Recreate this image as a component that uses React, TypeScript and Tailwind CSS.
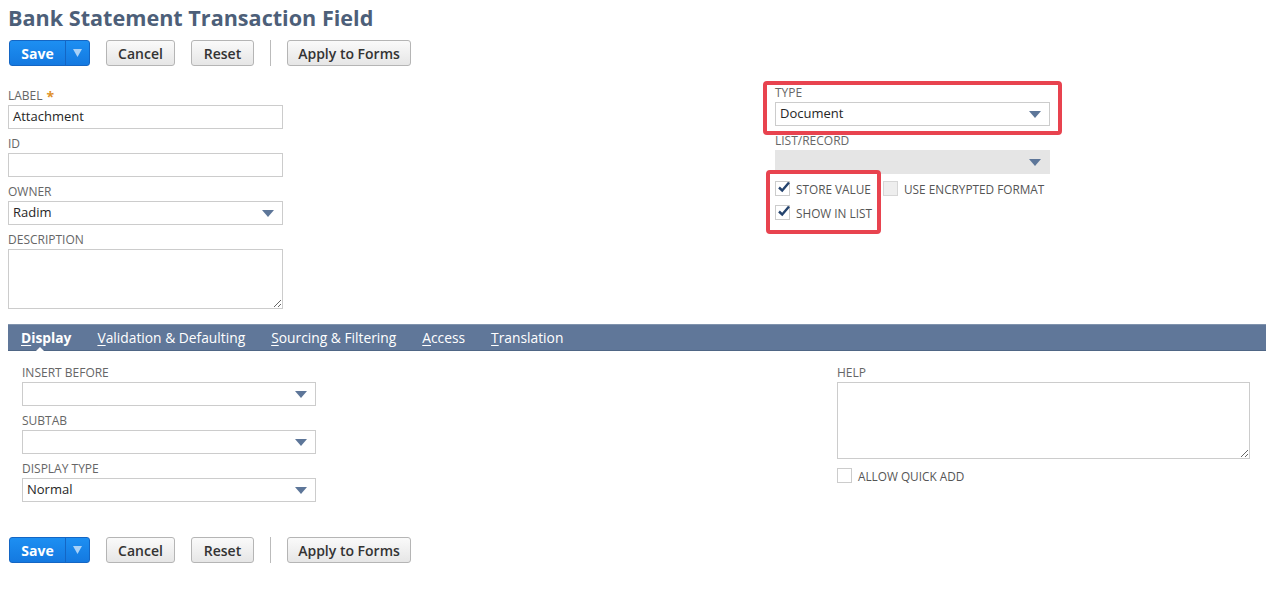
import type { ReactNode } from 'react'

const font = { fontFamily: '"Open Sans", "Liberation Sans", sans-serif' }

function Caret() {
  return (
    <svg width="12" height="7" viewBox="0 0 12 7" className="shrink-0">
      <path d="M0 0 L12 0 L6 7 Z" fill="#5d7699" />
    </svg>
  )
}

function FieldLabel({ children }: { children: ReactNode }) {
  return (
    <div className="h-[20px] flex items-end pb-[1px] text-[12px] leading-[16px] uppercase text-[#666]">
      {children}
    </div>
  )
}

function TextInput({ value, width }: { value?: string; width: string }) {
  return (
    <div className={`${width} h-[24px] border border-[#ccc] bg-white px-[4px] flex items-center text-[13px] text-[#262626]`}>
      {value}
    </div>
  )
}

function Select({ value, width, disabled }: { value?: string; width: string; disabled?: boolean }) {
  return (
    <div
      className={`${width} h-[24px] border flex items-center justify-between pl-[4px] pr-[8px] text-[13px] text-[#262626] ${
        disabled ? 'bg-[#e5e5e5] border-[#e5e5e5]' : 'bg-white border-[#ccc]'
      }`}
    >
      <span>{value}</span>
      <Caret />
    </div>
  )
}

function Checkbox({ checked, disabled }: { checked?: boolean; disabled?: boolean }) {
  return (
    <div
      className={`w-[15px] h-[15px] border relative shrink-0 ${
        disabled ? 'bg-[#eee] border-[#d6d6d6]' : 'bg-white border-[#ccc]'
      }`}
    >
      {checked && (
        <svg width="14" height="12" viewBox="0 0 14 12" className="absolute left-[1px] top-[-1px]">
          <path d="M2 6.5 L5.2 9.5 L12 1.5" fill="none" stroke="#24436e" strokeWidth="2.4" />
        </svg>
      )}
    </div>
  )
}

function CheckRow({ label, checked, disabled }: { label: string; checked?: boolean; disabled?: boolean }) {
  return (
    <div className="flex items-center gap-[6px] h-[24px]">
      <Checkbox checked={checked} disabled={disabled} />
      <span className="text-[11.8px] uppercase text-[#555] pt-[3px]">{label}</span>
    </div>
  )
}

function GrayButton({ children, w }: { children: ReactNode; w: string }) {
  return (
    <button className={`${w} h-[26px] rounded-[3px] border border-[#b5b5b5] bg-gradient-to-b from-[#fafafa] to-[#e6e6e6] text-[14px] font-semibold text-[#333]`}>
      {children}
    </button>
  )
}

function ButtonBar() {
  return (
    <div className="flex items-center gap-4 pl-[9px]">
      <div className="flex h-[26px] w-[81px] rounded-[3px] border border-[#1466c4] bg-gradient-to-b from-[#1d8ff2] to-[#1479e0] overflow-hidden">
        <button className="w-[55px] text-[14px] font-bold text-white">Save</button>
        <div className="flex-1 border-l border-[#1466c4] flex items-center justify-center">
          <svg width="9" height="8" viewBox="0 0 9 8">
            <path d="M0 0 L9 0 L4.5 8 Z" fill="#a9d1f7" />
          </svg>
        </div>
      </div>
      <GrayButton w="w-[69px]">Cancel</GrayButton>
      <GrayButton w="w-[63px]">Reset</GrayButton>
      <div className="w-px h-[26px] bg-[#bbb]" />
      <GrayButton w="w-[124px]">Apply to Forms</GrayButton>
    </div>
  )
}

const tabs = [
  { key: 'D', rest: 'isplay', active: true },
  { key: 'V', rest: 'alidation & Defaulting' },
  { key: 'S', rest: 'ourcing & Filtering' },
  { key: 'A', rest: 'ccess' },
  { key: 'T', rest: 'ranslation' },
]

export default function App() {
  return (
    <div className="min-h-screen bg-white" style={font}>
      <h1 className="pl-[8px] pt-[3px] text-[21.6px] leading-[30px] font-bold text-[#4d5f79]">
        Bank Statement Transaction Field
      </h1>

      <div className="mt-[7px]">
        <ButtonBar />
      </div>

      {/* main fields */}
      <div className="flex pl-[8px] mt-[18px]">
        <div className="w-[767px] pt-[1px]">
          <FieldLabel>
            Label <span className="ml-[4px] text-[#e0912a] text-[14px] font-bold leading-[14px]">*</span>
          </FieldLabel>
          <TextInput value="Attachment" width="w-[275px]" />
          <div className="h-[4px]" />
          <FieldLabel>ID</FieldLabel>
          <TextInput width="w-[275px]" />
          <div className="h-[4px]" />
          <FieldLabel>Owner</FieldLabel>
          <Select value="Radim" width="w-[275px]" />
          <div className="h-[4px]" />
          <FieldLabel>Description</FieldLabel>
          <textarea className="block w-[275px] h-[60px] border border-[#ccc] bg-white" />
        </div>

        <div className="relative -mt-[2px]">
          <FieldLabel>Type</FieldLabel>
          <Select value="Document" width="w-[275px]" />
          <div className="h-[4px]" />
          <FieldLabel>List/Record</FieldLabel>
          <Select width="w-[275px]" disabled />
          <div className="h-[2px]" />
          <div className="flex items-center">
            <div className="w-[108px]">
              <CheckRow label="Store Value" checked />
            </div>
            <CheckRow label="Use Encrypted Format" disabled />
          </div>
          <CheckRow label="Show in List" checked />

          {/* highlight frames */}
          <div className="absolute left-[-12px] top-[-1px] w-[299px] h-[54px] border-[4px] border-[#e8434f] rounded-[4px]" />
          <div className="absolute left-[-9px] top-[88px] w-[115px] h-[64px] border-[4px] border-[#e8434f] rounded-[4px]" />
        </div>
      </div>

      {/* subtab bar */}
      <div className="ml-[8px] mt-[15px] h-[27px] bg-[#607799] border-t border-[#8093ad] border-b border-b-[#4f6685] flex items-center gap-[26px] pl-[13px] pt-[1px] text-[13.8px] text-white">
        {tabs.map((t) => (
          <div key={t.key} className={`relative ${t.active ? 'font-bold' : ''}`}>
            <span className="underline underline-offset-2">{t.key}</span>
            {t.rest}
            {t.active && (
              <div className="absolute left-[14px] top-[19px] w-0 h-0 border-l-[5px] border-r-[5px] border-b-[5px] border-l-transparent border-r-transparent border-b-white" />
            )}
          </div>
        ))}
      </div>

      {/* display tab content */}
      <div className="flex pl-[22px] mt-[11px]">
        <div className="w-[815px]">
          <FieldLabel>Insert Before</FieldLabel>
          <Select width="w-[294px]" />
          <div className="h-[4px]" />
          <FieldLabel>Subtab</FieldLabel>
          <Select width="w-[294px]" />
          <div className="h-[4px]" />
          <FieldLabel>Display Type</FieldLabel>
          <Select value="Normal" width="w-[294px]" />
        </div>
        <div>
          <FieldLabel>Help</FieldLabel>
          <textarea className="block w-[413px] h-[77px] border border-[#ccc] bg-white" />
          <div className="flex items-center gap-[6px] mt-[6px]">
            <Checkbox />
            <span className="text-[11.8px] uppercase text-[#555] pt-[3px]">Allow Quick Add</span>
          </div>
        </div>
      </div>

      <div className="mt-[35px] pb-[38px]">
        <ButtonBar />
      </div>
    </div>
  )
}
